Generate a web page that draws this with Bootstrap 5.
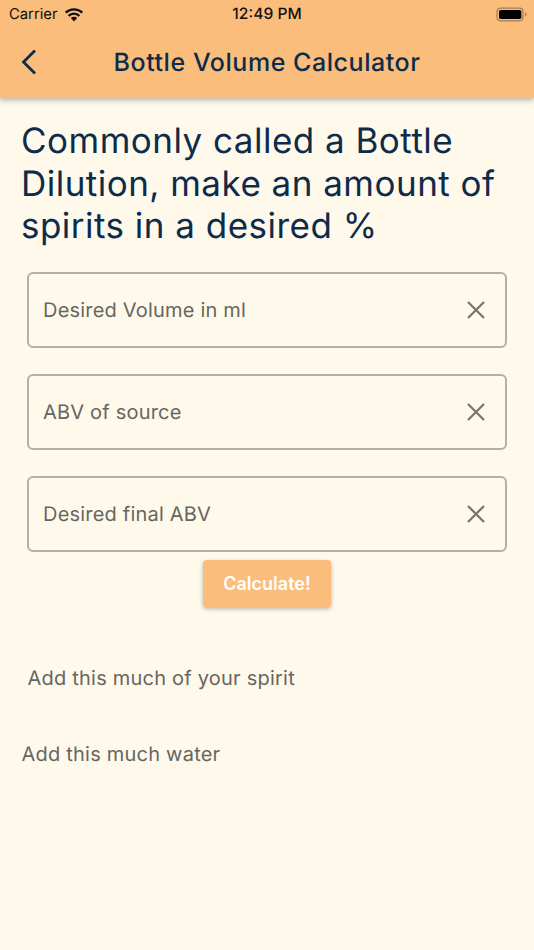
<!DOCTYPE html>
<html lang="en">
<head>
<meta charset="utf-8">
<title>Bottle Volume Calculator</title>
<link rel="stylesheet" href="https://cdn.jsdelivr.net/npm/bootstrap@5.3.0/dist/css/bootstrap.min.css">
<style>
html, body { height: 100%; }
body { background: #fff9eb; font-family: Inter, "Liberation Sans", sans-serif; color: #0a2540; overflow: hidden; text-rendering: geometricPrecision; }
.app-top { background: #fbbd7c; height: 98px; box-shadow: 0 2px 6px rgba(0,0,0,.3); position: relative; }
.status-row { height: 28px; padding: 0 7px 0 9px; font-size: 14.8px; color: #111; }
.status-side { width: 120px; }
.carrier-wifi { margin-left: 2px; }
.status-time { font-weight: 500; font-size: 15.6px; margin-left: -2px; }
.title-row { height: 70px; padding-top: 1px; }
.back-btn { left: 20px; top: 49px; line-height: 0; }
.app-title { font-size: 25px; font-weight: 500; color: #0d2b4a; letter-spacing: .55px; }
.page-head { font-size: 35px; line-height: 42.5px; padding: 22px 21px 0; margin: 0; color: #0d2b4a; font-weight: 400; letter-spacing: .48px; }
.fields { padding: 24px 27px 0 27px; gap: 26px; }
.field-box { height: 76px; border: 2px solid #b2b0a2; border-radius: 6px; padding: 0 19px 0 14px; }
.field-label { font-size: 20px; color: #666660; letter-spacing: .2px; }
.calc-wrap { padding-top: 8px; }
.calc-btn { width: 128px; height: 47px; padding: 0; background: #fbbd7c; border: 0; border-radius: 4px; color: #fff; font-size: 18px; font-weight: 600; box-shadow: 0 2px 4px rgba(0,0,0,.28); }
.res-one { font-size: 20px; color: #666660; padding: 58px 0 0 27.5px; letter-spacing: .22px; line-height: 26px; }
.res-two { font-size: 20px; color: #666660; padding: 50px 0 0 21.5px; letter-spacing: .22px; line-height: 26px; }
</style>
</head>
<body>
<header class="app-top">
  <div class="status-row d-flex align-items-center justify-content-between">
    <div class="status-side d-flex align-items-center gap-1">
      <span>Carrier</span>
      <svg class="carrier-wifi" width="20" height="15" viewBox="0 0 20 15" aria-hidden="true"><path d="M10 14.5 6.8 11.1a4.6 4.6 0 0 1 6.4 0z" fill="#111"/><path d="M4.6 8.8a7.8 7.8 0 0 1 10.8 0M1.7 5.7a12 12 0 0 1 16.6 0" fill="none" stroke="#111" stroke-width="2.4"/></svg>
    </div>
    <div class="status-time">12:49 PM</div>
    <div class="status-side d-flex justify-content-end">
      <svg width="31" height="15" viewBox="0 0 31 15" aria-hidden="true"><rect x="1" y="1.2" width="26" height="12.6" rx="3.5" fill="none" stroke="#a87b4d" stroke-width="1.2"/><rect x="3" y="3" width="22.4" height="9" rx="1.8" fill="#000"/><path d="M29 5.5c1 .3 1.5 1 1.5 2s-.5 1.700-1.500 2z" fill="#a87b4d"/></svg>
    </div>
  </div>
  <div class="title-row d-flex align-items-center justify-content-center">
    <span class="app-title">Bottle Volume Calculator</span>
  </div>
  <span class="back-btn position-absolute"><svg width="18" height="26" viewBox="0 0 18 26" aria-hidden="true"><path d="M15 1.500 3.500 13 15 24.500" fill="none" stroke="#0d2b4a" stroke-width="2.800"/></svg></span>
</header>
<main>
  <h1 class="page-head">Commonly called a Bottle Dilution, make an amount of spirits in a desired %</h1>
  <div class="fields d-flex flex-column">
    <div class="field-box d-flex align-items-center justify-content-between"><span class="field-label">Desired Volume in ml</span><svg width="20" height="20" viewBox="0 0 20 20" aria-hidden="true"><path d="M2 2l16 16M18 2 2 18" stroke="#777770" stroke-width="2.300" fill="none"/></svg></div>
    <div class="field-box d-flex align-items-center justify-content-between"><span class="field-label">ABV of source</span><svg width="20" height="20" viewBox="0 0 20 20" aria-hidden="true"><path d="M2 2l16 16M18 2 2 18" stroke="#777770" stroke-width="2.300" fill="none"/></svg></div>
    <div class="field-box d-flex align-items-center justify-content-between"><span class="field-label">Desired final ABV</span><svg width="20" height="20" viewBox="0 0 20 20" aria-hidden="true"><path d="M2 2l16 16M18 2 2 18" stroke="#777770" stroke-width="2.300" fill="none"/></svg></div>
  </div>
  <div class="calc-wrap d-flex justify-content-center"><button type="button" class="btn calc-btn">Calculate!</button></div>
  <div class="res-one">Add this much of your spirit</div>
  <div class="res-two">Add this much water</div>
</main>
<script src="https://cdn.jsdelivr.net/npm/bootstrap@5.3.0/dist/js/bootstrap.bundle.min.js"></script>
</body>
</html>
